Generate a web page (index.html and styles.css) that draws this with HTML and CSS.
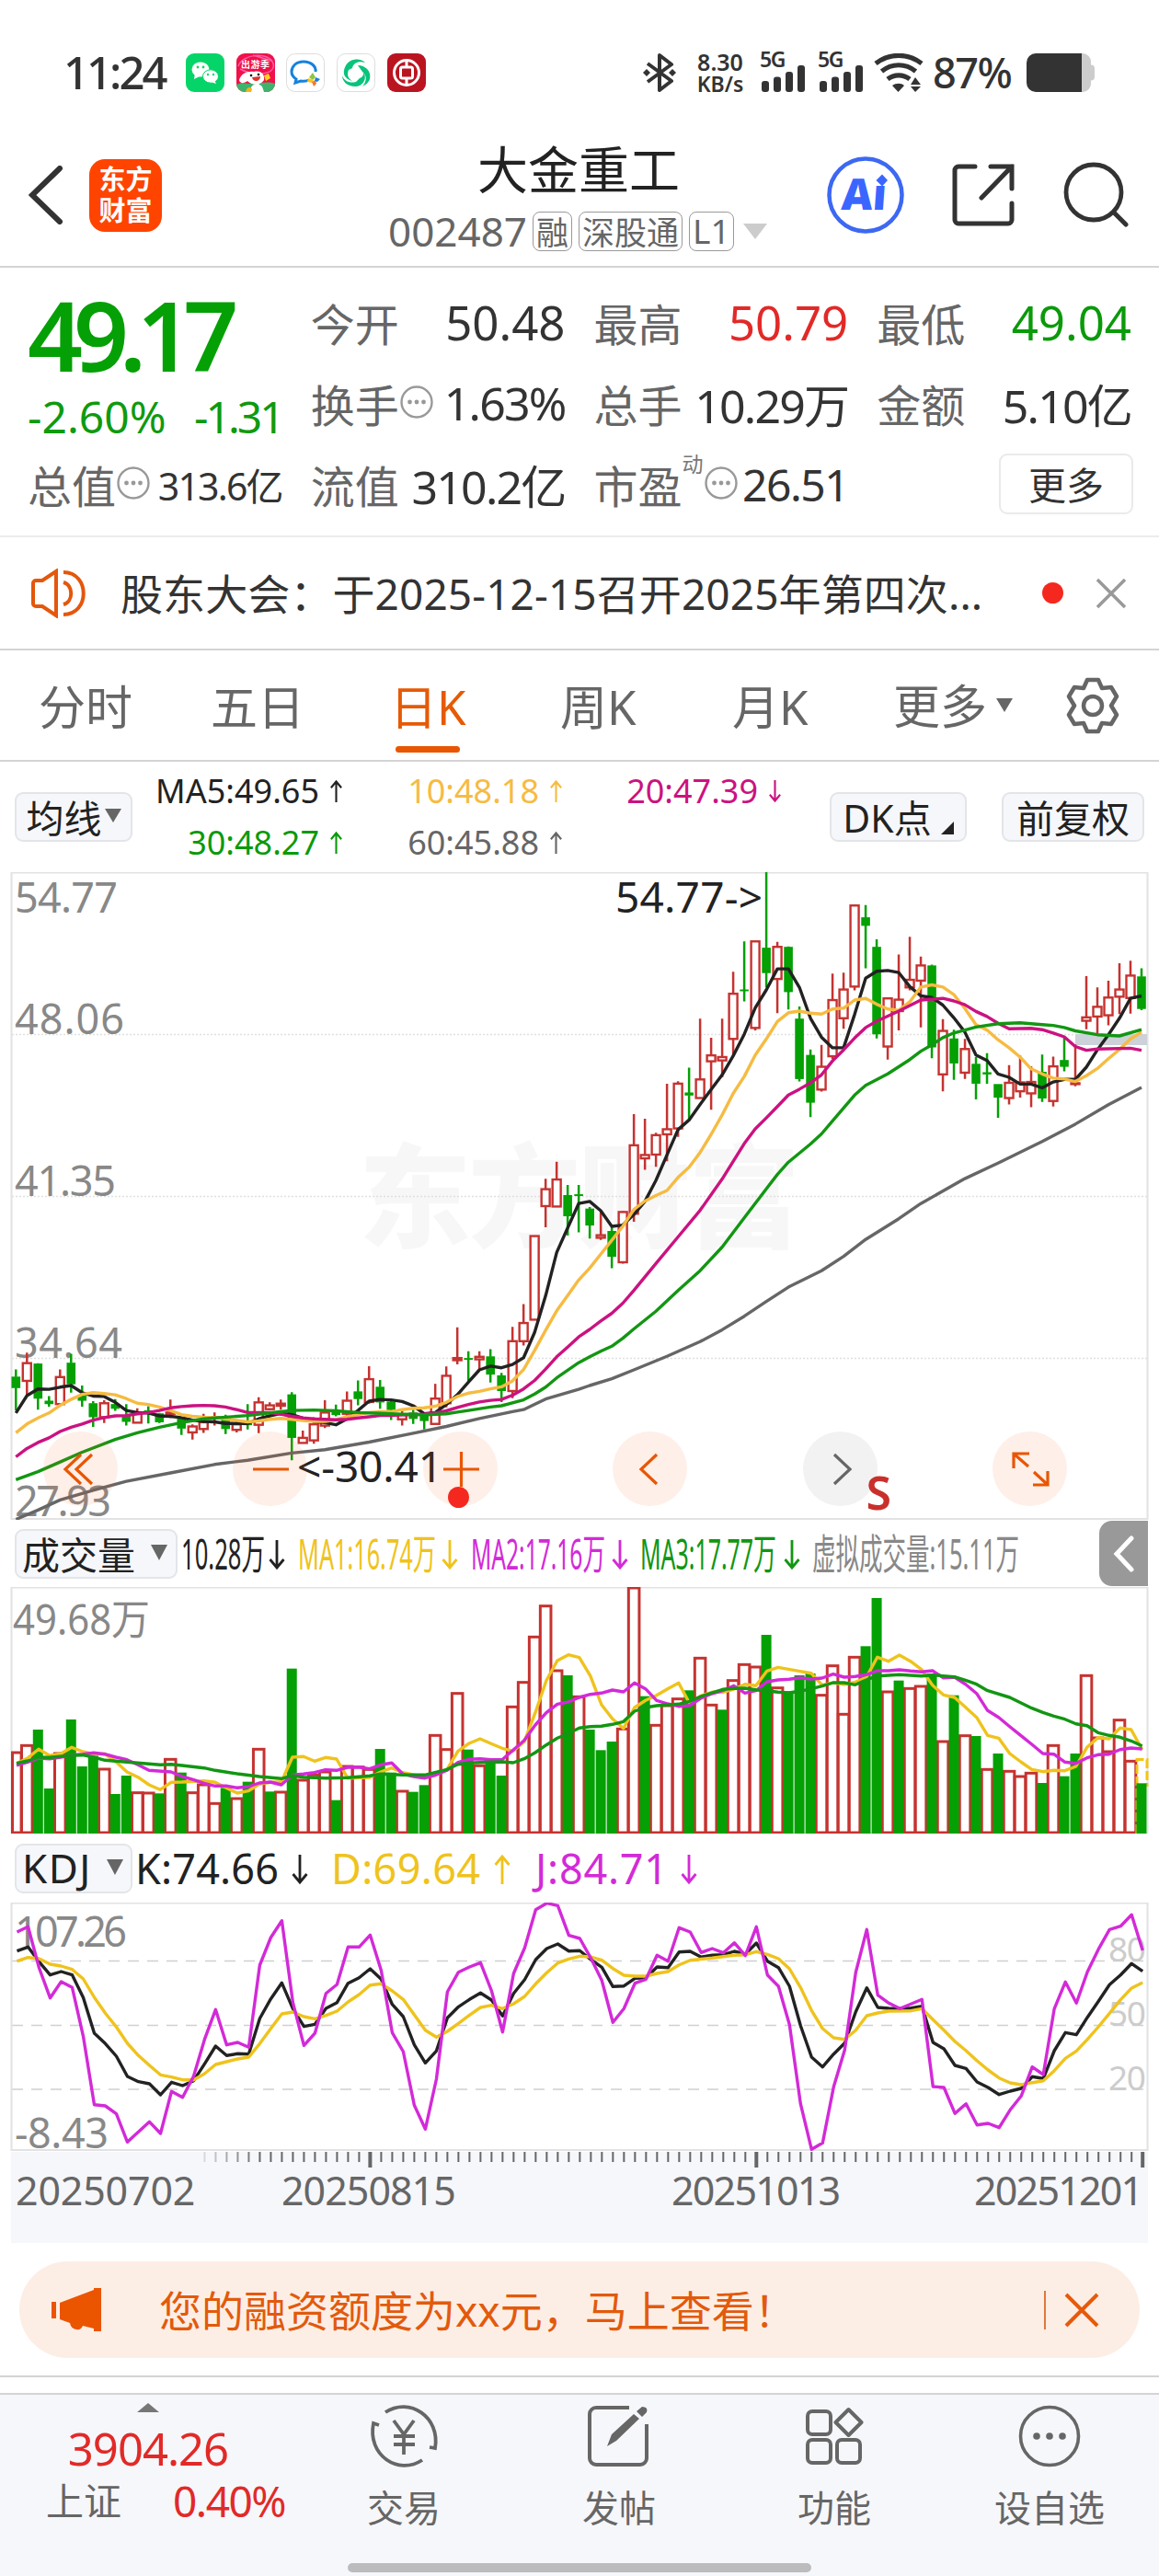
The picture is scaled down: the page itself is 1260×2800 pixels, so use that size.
FILE: index.html
```html
<!DOCTYPE html>
<html lang="zh-CN">
<head>
    <meta charset="UTF-8">
    <meta name="viewport" content="width=device-width, initial-scale=1.0">
    <title>大金重工 002487</title>
    <link rel="stylesheet" href="styles.css">
</head>
<body>

<svg class="defs" width="0" height="0">
    <symbol id="up" viewBox="0 0 20 34"><path d="M10 33V3M2.500 12L10 3l7.500 9" fill="none" stroke="currentColor" stroke-width="2.800"/></symbol>
    <symbol id="down" viewBox="0 0 20 34"><path d="M10 1v30M2.500 22l7.500 9 7.500-9" fill="none" stroke="currentColor" stroke-width="2.800"/></symbol>
    <symbol id="info" viewBox="0 0 38 38"><circle cx="19" cy="19" r="16.500" fill="none" stroke="#999" stroke-width="2.400"/><g fill="#999"><circle cx="11.500" cy="19" r="2.400"/><circle cx="19" cy="19" r="2.400"/><circle cx="26.500" cy="19" r="2.400"/></g></symbol>
    <symbol id="signal" viewBox="0 0 48 30"><g fill="#333"><rect x="0" y="17" width="8" height="12" rx="3"/><rect x="13" y="12.500" width="8" height="16.500" rx="3"/><rect x="26" y="7" width="8" height="22" rx="3"/><rect x="39" y="0" width="8" height="29" rx="3"/></g></symbol>
</svg>

<div class="status">
    <span class="clock">11:24</span>
    <div class="apps">
        <svg width="42" height="42" viewBox="0 0 42 42"><rect width="42" height="42" rx="9" fill="#05d568"/><ellipse cx="16" cy="17.500" rx="9.500" ry="8" fill="#fff"/><path d="M10 22l-1 6 6-3z" fill="#fff"/><ellipse cx="27" cy="25" rx="8.500" ry="7.200" fill="#fff" stroke="#05d568"/><path d="M31 29l2 4-6-2z" fill="#fff"/><g fill="#05d568"><circle cx="13" cy="15" r="1.400"/><circle cx="19" cy="15" r="1.400"/><circle cx="24" cy="23" r="1.200"/><circle cx="30" cy="23" r="1.200"/></g></svg>
        <svg width="42" height="42" viewBox="0 0 42 42"><rect width="42" height="42" rx="9" fill="#f0104a"/><path d="M0 34c8-4 12 0 20-1s14-3 22 0v0a9 9 0 0 1-9 9H9a9 9 0 0 1-9-9z" fill="#3eb36c"/><path d="M2 14c4-14 34-16 38-3s-22 14-36 6M18 2l20 6" fill="none" stroke="#ff5fa8" stroke-width="1.500"/><text x="5" y="16" class="app-word" textLength="31">出游季</text><path d="M3 29c2-7 9-10 16-9 8-2 12 3 11 9-3 6-14 6-18 1-4 3-8 3-9-1z" fill="#fff"/><path d="M15 42c0-7 4-9 9-9l4 3 2 6z" fill="#fff"/><path d="M10 42c1-6 6-6 7-3l-1 3z" fill="#f6b21c"/><path d="M30 24l5-2 2 5-5 3z" fill="#ffd21e"/><path d="M17 26l9-1c0 6-8 7-9 1z" fill="#e0332f"/><circle cx="16" cy="24" r="1.300"/><circle cx="24" cy="23" r="1.300"/></svg>
        <svg width="42" height="42" viewBox="0 0 42 42"><rect x=".5" y=".5" width="41" height="41" rx="9" fill="#fff" stroke="#ddd"/><path d="M32 20c1-6-5-11-13-11S6 14 6 20c0 4 2 6 5 8l-1 4 6-2c4 .5 7 0 9-1" fill="none" stroke="#1582dd" stroke-width="3"/><path d="M29 21l3 5-3 3-4-3z" fill="#8cc63f"/><path d="M24 27l-1 4 5 1 2-3z" fill="#fcc419"/><path d="M28 31l2 5 3-3-1-4z" fill="#f4792a"/><path d="M32 26l5 2-3 3-3-1z" fill="#1582dd"/></svg>
        <svg width="42" height="42" viewBox="0 0 42 42"><rect x=".5" y=".5" width="41" height="41" rx="9" fill="#fff" stroke="#ddd"/><g fill="#08c37b"><path d="M10 13C15 5 26 5 31 10c-7-2-13 0-14 6l-4 2c-2 5-1 9 4 12-8-2-12-8-7-17z"/><path d="M23 13c9 0 15 7 13 15-2 5-6 7-8 8 5-6 5-12 0-16z"/><path d="M6 24c2 6 8 9 15 7l4-4c3-1 5-4 4-7 5 8-1 16-9 16S6 31 6 24z"/></g></svg>
        <svg width="42" height="42" viewBox="0 0 42 42"><rect width="42" height="42" rx="9" fill="#bb1421"/><circle cx="21" cy="21" r="13.500" fill="none" stroke="#fff" stroke-width="3"/><path d="M21 7v8M21 27v8" stroke="#fff" stroke-width="3"/><rect x="14.500" y="15" width="13" height="12" rx="2" fill="none" stroke="#fff" stroke-width="3"/></svg>
    </div>
    <div class="status-right">
        <svg width="38" height="42" viewBox="0 0 38 42"><path d="M6 11l26 19-13 10V2l13 10L6 31" fill="none" stroke="#333" stroke-width="4" stroke-linejoin="round"/><path d="M1 21l4-4 4 4-4 4zM29 21l4-4 4 4-4 4z" fill="#333"/></svg>
        <div class="speed"><b>8.30</b><b>KB/s</b></div>
        <div class="cell"><b>5G</b><svg width="48" height="30"><use href="#signal"/></svg></div>
        <div class="cell"><b>5G</b><svg width="48" height="30"><use href="#signal"/></svg></div>
        <svg class="wifi" width="54" height="42" viewBox="0 0 54 42"><g fill="none" stroke="#333" stroke-width="5.200"><path d="M2 11C17-.5 37-.5 52 11"/><path d="M8.500 19.500c11-9 26-9 37 0"/><path d="M15 28c7-5.500 17-5.500 24 0"/></g><path d="M20 35c4-3 10-3 13 0l-6.500 7zM40 34l5-8 6 8zM40 36h11l-6 6z" fill="#333"/></svg>
        <span class="percent">87%</span>
        <svg width="74" height="42" viewBox="0 0 74 42"><path d="M60 0h1a9 9 0 0 1 9 9v3.500q4 0 4 4v9q0 4-4 4V33a9 9 0 0 1-9 9h-1z" fill="#ccc"/><path d="M10 0h50v42H10A10 10 0 0 1 0 32V10A10 10 0 0 1 10 0z" fill="#333"/></svg>
    </div>
</div>

<header class="header">
    <svg width="38" height="64" viewBox="0 0 38 64"><path d="M34 3L4 32l30 29" fill="none" stroke="#333" stroke-width="6" stroke-linecap="round"/></svg>
    <div class="logo"><span>东方</span><span>财富</span></div>
    <div class="stock">
        <h1>大金重工</h1>
        <div class="code"><span class="num">002487</span><i>融</i><i>深股通</i><i class="l1">L1</i><svg width="26" height="18"><path d="M0 1h26L13 18z" fill="#ccc"/></svg></div>
    </div>
    <div class="tools">
        <svg width="84" height="84" viewBox="0 0 84 84"><circle cx="42" cy="42" r="39.500" fill="none" stroke="#3c68f2" stroke-width="4.500"/><g transform="skewX(-4)"><text x="19" y="58" class="ai-word" textLength="49" lengthAdjust="spacingAndGlyphs">Aı</text></g><path d="M60 19.500l6 6.500-6 6.500-6.500-6.500z" fill="#3a66ff"/></svg>
        <svg width="68" height="68" viewBox="0 0 68 68"><path d="M25 3H7a4 4 0 0 0-4 4v54a4 4 0 0 0 4 4h54a4 4 0 0 0 4-4V43M42 3h23v24M65 3L32 37" fill="none" stroke="#333" stroke-width="5" stroke-linecap="round"/></svg>
        <svg width="72" height="72" viewBox="0 0 72 72"><circle cx="34" cy="33" r="30" fill="none" stroke="#333" stroke-width="4.800"/><path d="M56 55l13 13" stroke="#333" stroke-width="5" stroke-linecap="round"/></svg>
    </div>
</header>

<section class="quote">
    <div class="col">
        <div class="price">49.17</div>
        <div class="change"><span>-2.60%</span><span class="diff">-1.31</span></div>
        <div class="cellrow small"><label>总值</label><svg width="38" height="38"><use href="#info"/></svg><span class="unit">313.6亿</span></div>
    </div>
    <div class="col">
        <div class="cellrow"><label>今开</label><span>50.48</span></div>
        <div class="cellrow"><label>换手</label><svg width="38" height="38"><use href="#info"/></svg><span class="unit">1.63%</span></div>
        <div class="cellrow"><label>流值</label><span class="unit">310.2亿</span></div>
    </div>
    <div class="col">
        <div class="cellrow"><label>最高</label><span class="red">50.79</span></div>
        <div class="cellrow"><label>总手</label><span class="unit">10.29万</span></div>
        <div class="cellrow pe"><label>市盈</label><sup>动</sup><svg width="38" height="38"><use href="#info"/></svg><span>26.51</span></div>
    </div>
    <div class="col">
        <div class="cellrow"><label>最低</label><span class="green">49.04</span></div>
        <div class="cellrow"><label>金额</label><span class="unit">5.10亿</span></div>
        <div class="cellrow"><button class="more">更多</button></div>
    </div>
</section>

<section class="notice">
    <svg width="62" height="54" viewBox="0 0 62 54"><g fill="none" stroke="#e4570c" stroke-width="4"><path d="M28 3v48L13 41H6a3 3 0 0 1-3-3V16a3 3 0 0 1 3-3h7z"/><path d="M36 15c11 3 11 21 0 24M36 4c29 0 29 46 0 46"/></g></svg>
    <p>股东大会：于2025-12-15召开2025年第四次...</p>
    <span class="dot"></span>
    <svg width="34" height="34"><path d="M2 2l30 30M32 2L2 32" stroke="#999" stroke-width="3.500"/></svg>
</section>

<nav class="tabs">
    <a>分时</a><a>五日</a><a class="active">日K</a><a>周K</a><a>月K</a><a class="tab-more">更多<svg width="18" height="15"><path d="M0 0h18L9 15z" fill="#666"/></svg></a>
    <svg class="gear" width="62" height="62" viewBox="0 0 62 62"><path d="M25 3h12l4 9 10-1 6 10-6 10 6 10-6 10-10-1-4 9H25l-4-9-10 1-6-10 6-10-6-10 6-10 10 1z" fill="none" stroke="#666" stroke-width="4.500" stroke-linejoin="round"/><circle cx="31" cy="31" r="10" fill="none" stroke="#666" stroke-width="4.500"/></svg>
</nav>

<div class="ma-bar">
    <button>均线<svg width="18" height="15"><path d="M0 0h18L9 15z" fill="#666"/></svg></button>
    <div class="ma-values">
        <span class="k">MA5:49.65<svg width="15" height="26"><use href="#up"/></svg></span>
        <span class="yellow">10:48.18<svg width="15" height="26"><use href="#up"/></svg></span>
        <span class="pink">20:47.39<svg width="15" height="26"><use href="#down"/></svg></span>
        <span class="green">30:48.27<svg width="15" height="26"><use href="#up"/></svg></span>
        <span class="gray">60:45.88<svg width="15" height="26"><use href="#up"/></svg></span>
    </div>
    <button class="dk">DK点<svg width="14" height="14"><path d="M14 0v14H0z" fill="#222"/></svg></button>
    <button class="adjust">前复权</button>
</div>

<div class="kline">
    <svg id="kChart" width="1260" height="704">
        <text class="watermark" x="390" y="398" textLength="480">东方财富</text>
        <g class="grid dotted"><path d="M13 176.500H1247M13 352.500H1247M13 528.500H1247"/></g>
        <rect class="frame" x="12.500" y="0.500" width="1235" height="702.500"/>
        <g class="axis-label">
            <text x="16" y="44" textLength="112">54.77</text>
            <text x="16" y="176" textLength="119">48.06</text>
            <text x="16" y="352" textLength="110">41.35</text>
            <text x="16" y="528" textLength="117">34.64</text>
            <text x="16" y="700" textLength="105">27.93</text>
        </g>
        <rect x="1169" y="176" width="78" height="12" fill="#cdd1d9"/>
        <g id="kPlot"></g>
        <text class="mark" x="669" y="44" textLength="160">54.77-&gt;</text>
        <text class="mark" x="323" y="663" textLength="158">&lt;-30.41</text>
    </svg>
    <div class="controls">
        <button><svg width="82" height="82"><path d="M41 25L24 41l17 16M53 25L36 41l17 16"/></svg></button>
        <button><svg width="82" height="82"><path d="M22 41h39"/></svg></button>
        <button><svg width="82" height="82"><path d="M22 41h39M41.500 22v38"/></svg><span class="dot"></span></button>
        <button><svg width="82" height="82"><path d="M48 25L31 41l17 16"/></svg></button>
        <button class="off"><svg width="82" height="82"><path d="M34 25l17 16-17 16"/></svg><b>S</b></button>
        <button><svg width="82" height="82"><path d="M40 24H23v16M24 25l15 13M44 58h16V43M59 57L45 44"/></svg></button>
    </div>
</div>

<div class="ind-bar">
    <button class="wide">成交量<svg width="18" height="17"><path d="M0 0h18L9 17z" fill="#666"/></svg></button>
    <svg class="ind-text" width="930" height="74">
        <text x="4" y="54" textLength="91" lengthAdjust="spacingAndGlyphs" fill="#222">10.28万</text><use href="#down" x="98" y="21" width="20" height="34" color="#222"/>
        <text x="131" y="54" textLength="150" lengthAdjust="spacingAndGlyphs" fill="#efc31c">MA1:16.74万</text><use href="#down" x="286" y="21" width="20" height="34" color="#efc31c"/>
        <text x="319" y="54" textLength="146" lengthAdjust="spacingAndGlyphs" fill="#d32ad8">MA2:17.16万</text><use href="#down" x="471" y="21" width="20" height="34" color="#d32ad8"/>
        <text x="503" y="54" textLength="148" lengthAdjust="spacingAndGlyphs" fill="#129612">MA3:17.77万</text><use href="#down" x="658" y="21" width="20" height="34" color="#129612"/>
        <text x="690" y="54" textLength="225" lengthAdjust="spacingAndGlyphs" fill="#888">虚拟成交量:15.11万</text>
    </svg>
    <span class="drawer"><svg width="24" height="40"><path d="M20 3L4 20l16 17" fill="none" stroke="#fff" stroke-width="5" stroke-linecap="round"/></svg></span>
</div>
<svg id="volChart" class="block" width="1260" height="268">
    <rect class="frame" x="12.500" y="0.500" width="1235" height="267"/>
    <g class="axis-label"><text x="14" y="52" textLength="149" lengthAdjust="spacingAndGlyphs">49.68万</text></g>
    <g id="volPlot"></g>
</svg>

<div class="ind-bar kdj">
    <button class="narrow">KDJ<svg width="18" height="17"><path d="M0 0h18L9 17z" fill="#666"/></svg></button>
    <svg class="ind-text" width="700" height="75">
        <text x="3" y="55" textLength="156" fill="#222">K:74.66</text><use href="#down" x="172" y="22" width="20" height="34" color="#222"/>
        <text x="216" y="55" textLength="162" fill="#efc31c">D:69.64</text><use href="#up" x="392" y="22" width="20" height="34" color="#efc31c"/>
        <text x="438" y="55" textLength="144" fill="#d32ad8">J:84.71</text><use href="#down" x="595" y="22" width="20" height="34" color="#d32ad8"/>
    </svg>
</div>
<svg id="kdjChart" class="block" width="1260" height="270">
    <g class="grid dashed"><path d="M13 63.500H1247M13 133.500H1247M13 203H1247"/></g>
    <rect class="frame" x="12.500" y="0.500" width="1235" height="268.500"/>
    <g class="axis-label">
        <text x="16" y="48" textLength="122">107.26</text>
        <text x="16" y="267" textLength="102">-8.43</text>
    </g>
    <g class="level">
        <text x="1205" y="64" textLength="41">80</text>
        <text x="1205" y="134" textLength="41">50</text>
        <text x="1205" y="204" textLength="41">20</text>
    </g>
    <g id="kdjPlot"></g>
</svg>
<div class="dates">
    <svg id="ticks" class="block" width="1235" height="22"></svg>
    <div><span>20250702</span><span>20250815</span><span>20251013</span><span>20251201</span></div>
</div>

<div class="promo">
    <svg width="56" height="48" viewBox="0 0 56 48"><path d="M0 15h5v18H0zM9 16L46 2V0h8v47h-8v-3l-12-3q-2 5-7 4-6-1-7-7L9 34z" fill="#eb5500"/></svg>
    <p>您的融资额度为xx元，马上查看！</p>
    <i></i>
    <svg width="40" height="40"><path d="M3 3l34 34M37 3L3 37" stroke="#e65a0a" stroke-width="4"/></svg>
</div>

<footer class="footer">
    <div class="index">
        <svg width="24" height="10"><path d="M12 0l12 10H0z" fill="#777"/></svg>
        <strong>3904.26</strong>
        <div><span>上证</span><em>0.40%</em></div>
    </div>
    <a>
        <svg width="78" height="70" viewBox="0 0 78 70"><g fill="none" stroke="#666" stroke-width="3.800"><path d="M19 9c26-17 60 5 54 39l-6-1M59 61C33 78-1 56 6 21l6 2"/><path d="M28 18l11 15 11-15M28 35h23M28 44h23M39 33v22"/></g></svg>
        <span>交易</span>
    </a>
    <a>
        <svg width="70" height="66" viewBox="0 0 70 66"><path d="M46 2H10a7 7 0 0 0-7 7v48a7 7 0 0 0 7 7h48a7 7 0 0 0 7-7V20" fill="none" stroke="#666" stroke-width="4"/><path d="M22 44l5-13 24-22 6 5-25 24zM54 6l6-5q7 0 5 6l-5 5z" fill="#666"/></svg>
        <span>发帖</span>
    </a>
    <a>
        <svg width="64" height="64" viewBox="0 0 64 64"><g fill="none" stroke="#666" stroke-width="4"><rect x="3" y="5" width="25" height="25" rx="5"/><rect x="3" y="36" width="25" height="25" rx="5"/><rect x="35" y="36" width="25" height="25" rx="5"/><path d="M47.500 3l14 14-14 14-14-14z" stroke-linejoin="round"/></g></svg>
        <span>功能</span>
    </a>
    <a>
        <svg width="68" height="68" viewBox="0 0 68 68"><circle cx="34" cy="34" r="31.500" fill="none" stroke="#666" stroke-width="3.600"/><g fill="#666"><circle cx="20" cy="34" r="3.800"/><circle cx="34" cy="34" r="3.800"/><circle cx="48" cy="34" r="3.800"/></g></svg>
        <span>设自选</span>
    </a>
    <span class="home"></span>
</footer>

<script src="chart.js"></script>
</body>
</html>
```
FILE: styles.css
```css
* {
    box-sizing: border-box;
}
body {
    margin: 0;
    width: 1260px;
    height: 2800px;
    overflow: hidden;
    background: #fff;
    color: #222;
    font-family: 'Noto Sans', 'Noto Sans CJK SC', sans-serif;
}
svg {
    display: block;
    flex: none;
}
button {
    font: inherit;
    color: inherit;
    padding: 0;
    border: 2px solid #e3e5e8;
    border-radius: 9px;
    background: #f6f7fa;
}
p, h1 {
    margin: 0;
    font-weight: 400;
}
.defs {
    position: absolute;
}
.red { color: #e12a28; }
.green { color: #0a9a0a; }
.yellow { color: #f6bb42; }
.pink { color: #cb1280; }
.gray { color: #666; }

/* status bar */
.status {
    display: flex;
    align-items: center;
    height: 158px;
    padding: 0 70px 0 69px;
    color: #333;
}
.clock {
    width: 133px;
    padding-bottom: 2px;
    font-size: 49px;
    font-weight: 500;
    letter-spacing: -3px;
}
.apps {
    display: flex;
    gap: 12.700px;
}
.app-word {
    font-size: 10px;
    font-weight: 700;
    fill: #fff;
}
.status-right {
    display: flex;
    align-items: center;
    margin-left: auto;
}
.speed {
    display: flex;
    flex-direction: column;
    align-items: center;
    width: 56px;
    margin: 0 15px 0 19px;
    font-size: 25px;
    font-weight: 600;
    line-height: 24px;
}
.speed b, .cell b {
    font-weight: 600;
}
.speed b + b {
    font-size: 23px;
}
.cell {
    display: flex;
    flex-direction: column;
    width: 50px;
    margin-right: 13px;
    line-height: 14px;
    font-size: 23px;
    letter-spacing: -1.500px;
}
.cell svg {
    margin-left: 2px;
}
.wifi {
    margin-left: -2px;
}
.percent {
    width: 112px;
    padding-left: 10px;
    padding-bottom: 2px;
    font-size: 45px;
    font-weight: 500;
    letter-spacing: -1.500px;
}

/* header */
.header {
    display: flex;
    align-items: center;
    height: 133px;
    border-bottom: 2px solid #d4d4d4;
    padding: 0 33px 23px 31px;
}
.logo {
    display: flex;
    flex-direction: column;
    justify-content: center;
    align-items: center;
    width: 79px;
    height: 79px;
    margin-left: 28px;
    border-radius: 17px;
    background: #ff4400;
    color: #fff;
    font-size: 29px;
    font-weight: 700;
    line-height: 34px;
}
.stock {
    width: 420px;
    margin-left: 246px;
}
.stock h1 {
    padding: 5px 0 0 97px;
    font-size: 55px;
    line-height: 62px;
}
.code {
    display: flex;
    align-items: center;
    gap: 7px;
    height: 50px;
    margin-top: 11px;
    color: #666;
    font-size: 44px;
}
.code .num {
    width: 150px;
}
.code i {
    display: flex;
    align-items: center;
    height: 43px;
    padding: 0 3px 2px;
    border: 1.500px solid #999;
    border-radius: 8px;
    font-style: normal;
    font-size: 35px;
}
.code .l1 {
    font-size: 37px;
}
.code svg {
    margin-left: 3px;
}
.tools {
    display: flex;
    align-items: center;
    gap: 52px;
    margin-left: auto;
}
.ai-word {
    font-size: 47px;
    font-weight: 900;
    fill: #3a66ff;
    font-family: 'Noto Sans', sans-serif;
}

/* quote */
.quote {
    display: flex;
    gap: 31px;
    height: 293px;
    padding: 17px 30px 0;
    border-bottom: 2px solid #ececec;
}
.col {
    width: 277px;
}
.price {
    height: 118px;
    line-height: 112px;
    font-size: 105px;
    font-weight: 600;
    letter-spacing: -10px;
    color: #05a005;
}
.change {
    display: flex;
    justify-content: space-between;
    height: 58px;
    line-height: 54px;
    font-size: 48px;
    color: #0f9a0f;
}
.change .diff {
    letter-spacing: -3px;
}
.cellrow {
    display: flex;
    align-items: center;
    height: 88px;
    padding-bottom: 4px;
    font-size: 51px;
    color: #333;
    white-space: nowrap;
}
.cellrow label {
    font-size: 48px;
    color: #666;
}
.cellrow svg {
    margin-top: -2px;
}
.cellrow span {
    margin-left: auto;
}
.cellrow .red { color: #e12a28; }
.cellrow .green { color: #0a9a0a; }
.cellrow .unit {
    font-size: 50px;
    letter-spacing: -1.800px;
}
.small .unit {
    font-size: 41px;
}
.pe {
    font-size: 48px;
}
.cellrow.pe span {
    letter-spacing: -1.500px;
}
.pe sup {
    align-self: flex-start;
    margin-top: 2px;
    font-size: 23px;
    color: #777;
}
.more {
    width: 146px;
    height: 66px;
    margin-left: auto;
    margin-right: -2px;
    padding-bottom: 3px;
    border: 2px solid #eaeaea;
    background: #fff;
    font-size: 41px;
}

/* notice */
.notice {
    display: flex;
    align-items: center;
    height: 123px;
    padding: 0 35px 0 33px;
    border-bottom: 2px solid #d4d4d4;
}
.notice p {
    width: 1000px;
    margin-left: 36px;
    padding-bottom: 3px;
    font-size: 46px;
    letter-spacing: 0.100px;
    white-space: nowrap;
    color: #333;
}
.dot {
    width: 23px;
    height: 23px;
    border-radius: 50%;
    background: #f5281f;
}
.notice .dot {
    margin-left: 2px;
}
.notice svg:last-child {
    margin-left: auto;
}

/* tabs */
.tabs {
    display: flex;
    align-items: center;
    height: 121px;
    padding: 0 41px 0 42px;
    border-bottom: 2px solid #d4d4d4;
    color: #666;
    font-size: 51px;
}
.tabs a {
    width: 187px;
    height: 100px;
    line-height: 102px;
}
.tabs a:nth-child(2) { width: 195px; }
.tabs a:nth-child(3) { width: 185px; }
.tabs a:nth-child(5) { width: 175px; }
.tabs .active {
    color: #e65a05;
}
.tabs .active::after {
    content: '';
    display: block;
    width: 70px;
    height: 7px;
    margin-top: -8px;
    margin-left: 6px;
    border-radius: 4px;
    background: #e85604;
}
.tabs .tab-more {
    display: flex;
    align-items: center;
    gap: 10px;
    width: auto;
}
.gear {
    margin-left: auto;
}

/* moving averages */
.ma-bar {
    display: flex;
    align-items: center;
    height: 120px;
    padding: 0 16px;
}
.ma-bar button {
    display: flex;
    align-items: center;
    justify-content: center;
    gap: 3px;
    width: 128px;
    height: 54px;
    padding-bottom: 3px;
    font-size: 41px;
}
.ma-values {
    display: grid;
    grid-template-columns: 229px 239px 238px;
    font-size: 36px;
    line-height: 56px;
}
.ma-values span {
    display: flex;
    align-items: center;
    justify-content: flex-end;
    gap: 11px;
}
.ma-bar .dk {
    width: 149px;
    margin-left: 52px;
}
.ma-bar .dk svg {
    align-self: flex-end;
    margin: 0 0 3px 7px;
}
.ma-bar .adjust {
    width: 155px;
    margin-left: auto;
}

/* charts */
.kline {
    position: relative;
    height: 704px;
}
.frame {
    fill: none;
    stroke: #e2e2e2;
    stroke-width: 2;
}
.grid path {
    stroke: #e0e0e0;
    stroke-width: 1.500;
}
.dotted path {
    stroke-dasharray: 2 2;
}
.dashed path {
    stroke: #d0d0d0;
    stroke-dasharray: 12 9;
}
.axis-label {
    font-size: 45px;
    fill: #888;
}
.level {
    font-size: 37px;
    fill: #ccc;
}
.mark {
    font-size: 46px;
    fill: #222;
}
.watermark {
    font-size: 122px;
    font-weight: 900;
    fill: #f7f7f7;
}
.controls {
    position: absolute;
    left: 47px;
    top: 608px;
    width: 1113px;
    display: flex;
    justify-content: space-between;
}
.controls button {
    position: relative;
    width: 81px;
    height: 81px;
    border: none;
    border-radius: 50%;
    background: rgba(250, 100, 30, 0.1);
}
.controls path {
    fill: none;
    stroke: #e85604;
    stroke-width: 3.200;
}
.controls .off {
    background: #f2f2f2;
}
.controls .off path {
    stroke: #666;
}
.controls b {
    position: absolute;
    left: 69px;
    top: 32px;
    font-size: 50px;
    line-height: 68px;
    font-weight: 600;
    color: #c9302c;
}
.controls .dot {
    position: absolute;
    left: 27px;
    top: 60px;
}
.ind-bar {
    display: flex;
    align-items: center;
    height: 73px;
    padding-left: 16px;
}
.kdj {
    height: 75px;
}
.ind-bar button {
    display: flex;
    align-items: center;
    justify-content: space-between;
    height: 54px;
    padding: 0 9px 2px 6px;
    font-size: 41px;
}
.ind-bar .wide { width: 177px; }
.ind-bar .narrow {
    width: 128px;
    padding-right: 8px;
    font-size: 44px;
    letter-spacing: 1.500px;
}
.ind-text {
    font-size: 45px;
}
.drawer {
    display: flex;
    align-items: center;
    justify-content: center;
    width: 53px;
    height: 71px;
    margin-left: 72px;
    border-radius: 14px 0 0 14px;
    background: #999;
}
.block {
    display: block;
}
.dates {
    height: 99px;
    margin: 1px 12px 0;
    background: #f6f7fa;
    color: #666;
}
.dates div {
    display: flex;
    font-size: 43px;
    line-height: 40px;
    padding-left: 5px;
}
.dates span {
    width: 289px;
    letter-spacing: -0.200px;
}
.dates span:nth-child(2) { width: 424px; letter-spacing: -1px; }
.dates span:nth-child(3) { width: 329px; letter-spacing: -1.800px; }
.dates span:nth-child(4) { width: 185px; letter-spacing: -1.800px; }

/* promo */
.promo {
    display: flex;
    align-items: center;
    width: 1218px;
    height: 105px;
    margin: 20px 21px 19px;
    padding: 0 43px 0 35px;
    border-radius: 53px;
    background: #fdeee5;
    color: #e25a0c;
    font-size: 46px;
}
.promo p {
    width: 959px;
    margin-left: 61px;
    padding-bottom: 4px;
}
.promo i {
    width: 2px;
    height: 42px;
    margin-right: auto;
    margin-left: 3px;
    background: #e0783a;
}

/* footer */
.footer {
    position: relative;
    display: flex;
    height: 218px;
    border-top: 2px solid #d4d4d4;
    color: #666;
}
.footer::before {
    content: '';
    position: absolute;
    top: 17px;
    left: 0;
    right: 0;
    bottom: 0;
    border-top: 2px solid #d4d4d4;
    background: #f6f7fa;
}
.footer a, .index {
    position: relative;
    display: flex;
    flex-direction: column;
    align-items: center;
    width: 234px;
    padding-top: 28px;
}
.footer a svg {
    height: 72px;
}
.footer a span {
    font-size: 40px;
    line-height: 50px;
    margin-top: 17px;
}
.index {
    width: 322px;
}
.index strong {
    margin-top: 11px;
    font-size: 49px;
    line-height: 56px;
    font-weight: 400;
    letter-spacing: -1px;
    color: #e12a28;
}
.index div {
    display: flex;
    gap: 56px;
    font-size: 41px;
    line-height: 58px;
    margin-left: 38px;
}
.index em {
    font-style: normal;
    font-size: 46px;
    letter-spacing: -1.500px;
    color: #e12a28;
}
.home {
    position: absolute;
    left: 378px;
    bottom: 4px;
    width: 504px;
    height: 10px;
    border-radius: 5px;
    background: #bcbcbf;
}
```
FILE: chart.js
```js
const STEP = 11.997;
const RED = '#c53330';
const GREEN = '#04a004';

// [up, high, body top, body bottom, low] on a 1532 unit high axis that starts at 17
const candles = [
    [0,1195,1213,1238,1292],[1,1155,1180,1222,1255],[0,1180,1182,1263,1290],[0,1258,1270,1276,1283],[1,1195,1213,1277,1280],
    [0,1158,1180,1229,1250],[0,1233,1258,1268,1283],[0,1270,1276,1307,1331],[1,1268,1275,1308,1322],[0,1265,1278,1287,1293],
    [0,1277,1305,1318,1328],[1,1287,1300,1321,1322],[0,1282,1293,1296,1323],[0,1298,1300,1319,1322],[1,1266,1297,1300,1310],
    [0,1308,1312,1334,1350],[1,1325,1330,1344,1361],[1,1300,1320,1336,1345],[1,1297,1308,1311,1328],[0,1302,1308,1335,1348],
    [1,1318,1325,1338,1344],[0,1277,1323,1326,1337],[1,1261,1273,1326,1346],[1,1273,1280,1289,1292],[1,1266,1276,1281,1290],
    [0,1249,1255,1356,1410],[1,1340,1357,1369,1370],[1,1308,1325,1363,1371],[1,1268,1297,1328,1334],[0,1278,1296,1302,1306],
    [1,1247,1269,1300,1308],[0,1221,1248,1264,1280],[1,1187,1218,1272,1276],[0,1220,1237,1272,1288],[0,1268,1272,1290,1315],
    [1,1290,1303,1313,1328],[0,1290,1298,1311,1324],[0,1298,1300,1316,1337],[1,1229,1264,1324,1324],[1,1188,1210,1275,1285],
    [1,1095,1168,1173,1183],[0,1152,1169,1171,1222],[1,1152,1165,1171,1194],[0,1147,1165,1206,1226],[0,1203,1210,1245,1272],
    [1,1094,1128,1246,1263],[1,1040,1085,1128,1138],[1,878,879,1077,1077],[1,743,768,808,858],[1,703,745,809,809],
    [0,758,783,831,878],[0,758,781,783,870],[0,810,815,853,885],[1,820,877,883,888],[0,858,868,927,955],
    [1,820,822,941,944],[1,590,664,826,845],[1,601,687,695,722],[1,634,640,686,715],[1,518,626,638,702],
    [1,512,518,624,644],[0,480,540,545,602],[1,364,508,552,552],[1,409,451,465,580],[1,364,455,463,503],
    [1,253,305,412,452],[0,181,296,298,323],[1,181,181,386,392],[0,17,197,255,290],[1,182,194,270,351],
    [0,193,195,300,342],[0,335,365,506,513],[0,437,451,562,597],[1,426,478,532,537],[1,257,320,453,460],
    [1,255,295,363,388],[1,94,96,288,297],[0,95,125,143,245],[0,176,195,400,411],[1,314,316,430,461],
    [1,212,319,346,392],[1,170,272,290,297],[1,217,238,274,385],[0,236,239,431,458],[1,365,393,496,536],
    [0,390,412,469,509],[1,412,436,492,507],[0,455,472,517,555],[0,446,492,495,518],[0,520,520,550,599],
    [1,474,516,552,567],[1,451,515,536,551],[1,477,514,541,574],[0,449,491,552,561],[1,454,477,559,572],
    [0,408,463,477,489],[1,425,517,519,524],[1,263,361,369,389],[1,290,336,359,400],[1,274,314,356,380],
    [1,233,295,312,353],[1,227,262,315,352],[0,245,265,340,344]
];

// moving averages, "index:value" pairs
const ma = {
    '#666666': '0:1550 2:1528 4:1504 7:1481 10:1460 14:1440 18:1420 21:1410 25:1393 28:1385 32:1367 36:1346 39:1330 42:1311 45:1295 46:1290 48:1265 51:1242 52:1233 54:1217 56:1196 59:1164 62:1129 64:1101 66:1069 68:1034 70:1000 73:961 75:927 77:887 80:838 82:802 86:743 89:706 93:655 96:614 99:568 102:527',
    '#222222': '0:1298 1:1257 2:1241 3:1242 4:1237 5:1233 6:1250 7:1258 8:1259 9:1273 10:1292 11:1297 12:1298 13:1305 14:1306 15:1309 16:1315 17:1318 18:1319 19:1323 20:1323 21:1323 22:1312 23:1305 24:1299 25:1302 26:1310 27:1318 28:1321 29:1326 30:1312 31:1292 32:1270 33:1266 34:1267 35:1271 36:1281 37:1300 38:1297 39:1278 40:1255 41:1225 42:1196 43:1187 44:1191 45:1183 46:1167 47:1107 48:1020 49:918 50:860 51:802 52:797 53:819 54:856 55:853 56:828 57:797 58:747 59:687 60:627 61:604 62:567 63:532 64:497 65:452 66:401 67:338 68:296 69:246 70:246 71:290 72:363 73:408 74:433 75:433 76:354 77:268 78:252 79:250 80:255 81:288 82:310 83:314 84:332 85:362 86:396 87:450 88:463 89:495 90:503 91:519 92:519 93:528 94:514 95:508 96:508 97:479 98:438 99:402 100:363 101:316 102:310',
    '#f6bb42': '0:1345 1:1324 2:1310 3:1298 4:1280 5:1266 6:1254 7:1250 8:1252 9:1255 10:1264 11:1275 12:1278 13:1284 14:1292 15:1302 16:1306 17:1308 18:1309 19:1312 21:1319 22:1317 23:1313 24:1311 25:1313 26:1316 27:1318 28:1318 29:1314 30:1307 31:1302 32:1297 33:1295 34:1295 35:1290 36:1287 37:1286 38:1282 39:1273 40:1259 41:1251 42:1247 43:1241 44:1236 45:1222 46:1195 47:1150 48:1102 49:1056 50:1020 51:983 52:955 53:922 54:889 55:856 56:816 57:796 58:783 59:771 60:740 61:716 62:681 63:638 64:592 65:541 66:501 67:450 68:412 69:371 70:350 71:346 72:351 73:353 74:341 75:339 76:320 77:316 78:330 79:341 80:344 81:324 82:289 83:284 84:289 85:307 86:340 87:378 88:391 89:414 90:433 91:455 92:483 93:495 94:505 95:507 96:513 97:499 98:482 99:459 100:437 101:412 102:396',
    '#cb1280': '0:1402 1:1382 2:1368 3:1357 4:1342 5:1332 6:1324 7:1315 8:1309 9:1305 10:1304 11:1300 12:1297 13:1292 14:1286 15:1283 16:1281 17:1280 18:1281 19:1284 20:1290 21:1297 22:1297 23:1297 24:1301 25:1306 26:1310 27:1312 28:1313 29:1314 30:1313 31:1310 32:1307 33:1304 34:1304 35:1302 37:1301 38:1298 39:1293 40:1285 41:1278 42:1272 43:1268 44:1266 45:1256 46:1241 47:1221 48:1194 49:1165 50:1142 51:1118 52:1100 53:1080 54:1062 55:1038 56:1008 58:944 60:881 62:818 64:744 66:660 67:625 68:599 69:572 70:545 71:531 72:516 73:497 74:464 75:438 76:410 77:385 78:370 79:358 80:346 81:333 82:320 83:318 84:316 85:322 86:331 87:347 88:359 89:375 90:388 92:387 93:390 94:398 95:407 96:430 97:439 98:436 101:434 102:439',
    '#129612': '0:1456 2:1437 4:1414 6:1391 9:1361 11:1345 13:1332 15:1321 17:1312 19:1308 21:1304 23:1298 25:1292 27:1291 29:1293 31:1297 33:1299 35:1301 37:1302 39:1300 40:1296 41:1292 43:1284 44:1281 46:1267 47:1253 48:1237 49:1215 51:1179 52:1165 53:1152 54:1140 55:1121 56:1099 58:1057 60:1008 62:961 64:905 66:836 68:767 69:733 70:704 72:661 73:637 74:606 76:545 77:522 79:495 81:461 82:441 83:426 84:409 85:398 87:384 89:376 91:374 93:378 94:380 95:385 96:393 98:402 100:405 102:390'
};

const volumes = 'u765 u742 d690 d882 u768 d657 d810 d775 u819 d900 d840 u896 u897 d898 u787 d830 u896 u870 u931 d880 u915 d860 u754 d892 u894 d491 u855 u838 u828 d920 u810 u812 u820 d753 d830 u891 d893 d871 u709 u755 u572 d755 u808 d795 d840 u616 u536 u388 u287 u498 d513 u583 d690 d757 d729 u688 u228 d581 u676 u612 u590 d562 u457 u610 d625 u530 u478 u486 d381 u554 d565 d513 d507 u578 u482 u640 u454 d418 d261 u567 d530 u556 u549 d508 u729 d578 u710 d711 u820 d768 u826 u843 u832 d864 u742 d842 d768 u514 u717 u762 u659 u793 d865'.split(' ');

const volMa = {
    '#efc31c': '0:800 1:783 2:754 3:775 4:769 5:748 6:762 7:770 8:769 9:795 10:828 11:845 12:870 13:886 14:862 15:861 17:857 18:862 19:880 20:897 21:890 22:868 23:862 24:860 25:780 26:778 27:793 28:781 29:786 30:848 32:846 33:828 34:815 35:830 37:845 38:838 39:820 40:760 41:735 42:720 43:736 44:751 45:760 46:730 47:635 48:530 49:465 50:446 51:455 52:515 53:608 54:655 55:686 56:618 57:595 58:578 59:557 60:538 61:605 62:580 63:568 64:568 65:558 66:542 67:547 68:499 69:487 71:500 72:506 73:545 74:537 75:543 76:535 77:520 78:454 79:467 80:447 81:467 82:494 83:545 84:577 85:585 86:617 87:650 88:709 89:718 90:768 91:795 92:820 93:827 94:823 95:824 96:810 97:748 98:716 99:720 100:685 101:690 102:755',
    '#d32ad8': '0:807 1:796 2:783 3:785 4:780 5:773 6:770 7:766 8:770 9:780 10:788 11:805 12:823 14:828 15:843 16:853 17:865 18:874 19:874 20:880 21:876 22:864 23:861 24:870 25:838 26:835 27:830 28:821 29:823 30:813 31:812 32:818 33:805 34:799 35:835 36:843 37:848 38:838 39:823 40:797 41:787 42:785 43:788 44:788 45:757 46:725 47:675 48:635 49:607 50:600 51:585 52:575 53:571 54:561 55:567 56:538 57:557 58:595 59:606 60:614 61:611 62:588 63:573 64:563 65:547 66:571 67:563 68:534 69:528 70:526 71:521 72:525 73:522 74:509 75:519 76:517 77:511 78:498 79:498 80:495 81:499 82:502 83:498 84:521 85:519 86:542 87:572 88:628 89:650 90:680 91:709 92:738 93:768 94:770 95:796 96:800 97:782 98:772 99:770 100:755 101:750 102:753',
    '#129612': '0:800 1:792 2:780 3:781 5:774 6:773 7:780 8:790 10:796 13:805 14:803 15:807 17:815 18:823 20:834 22:843 24:850 25:840 26:845 28:848 30:847 32:841 33:835 35:838 37:838 39:820 40:803 41:799 43:796 44:795 45:798 46:785 47:765 48:740 49:718 50:703 51:685 52:680 53:679 54:673 55:664 56:630 57:618 58:612 60:607 61:598 62:582 63:570 64:559 65:556 66:555 67:560 69:568 70:570 71:565 72:557 73:548 74:537 75:537 76:544 77:528 78:515 80:511 82:515 83:512 85:518 86:529 87:542 88:563 90:585 92:620 93:634 94:646 95:656 96:671 97:677 98:700 99:709 100:715 101:727 102:743'
};

const kdj = {
    '#222222': '0:242 1:229 2:277 3:320 4:309 5:320 6:394 7:510 8:544 9:585 10:651 11:668 12:675 13:711 14:670 15:681 16:665 17:610 18:552 19:583 20:577 21:578 22:462 23:398 24:346 25:430 26:488 27:481 28:429 29:410 30:347 31:329 32:300 33:334 34:416 35:456 36:548 37:607 38:568 39:460 40:424 41:400 42:379 43:402 44:454 45:380 46:335 47:270 48:234 49:219 50:242 51:241 52:270 53:295 54:358 55:356 56:331 57:329 58:294 59:296 60:245 61:243 62:262 63:256 64:254 65:243 66:252 67:216 68:275 69:296 70:357 71:485 72:588 73:620 74:578 75:542 76:440 77:362 78:426 79:429 80:430 81:428 82:422 83:540 84:561 85:615 86:625 87:669 88:687 89:710 90:699 91:690 92:652 93:658 94:567 95:508 96:515 97:458 98:406 99:352 100:320 101:283 102:308',
    '#efc31c': '0:275 1:263 2:267 3:285 4:291 5:302 6:333 7:393 8:445 9:490 10:543 11:583 12:615 13:646 14:653 15:662 16:662 17:642 18:612 19:603 20:594 21:588 22:544 23:495 24:447 25:441 26:456 27:463 28:452 29:438 30:408 31:384 32:353 33:349 34:372 35:400 36:450 37:500 38:523 39:504 40:478 41:451 42:426 43:419 44:430 45:414 46:390 47:349 48:313 49:281 50:268 51:259 52:261 53:272 54:299 55:321 56:324 57:324 58:315 59:309 60:287 61:272 63:265 65:256 66:254 67:244 68:253 69:267 70:300 71:361 72:436 73:495 74:525 75:530 76:500 77:453 78:444 79:438 81:437 82:430 83:466 84:500 85:537 86:567 87:600 88:630 89:656 90:672 91:678 92:671 93:665 94:632 95:592 96:568 97:530 98:489 99:445 100:401 101:363 102:345',
    '#d32ad8': '0:180 1:163 2:297 3:395 4:342 5:361 6:520 7:743 8:747 9:773 10:865 11:832 12:799 13:837 14:700 15:719 16:650 17:530 18:433 19:548 20:540 21:556 22:288 23:198 24:143 25:410 26:550 27:510 28:380 29:351 30:229 31:229 32:190 33:305 34:508 35:570 36:745 37:823 38:660 39:375 40:311 41:294 42:280 43:372 44:506 45:315 46:232 47:107 48:86 49:94 50:191 51:201 52:265 53:338 54:475 55:430 56:347 57:334 58:256 59:275 60:166 61:180 62:247 63:234 64:248 65:215 66:257 67:163 68:320 69:357 70:482 71:740 72:889 73:868 74:685 75:565 76:312 77:172 78:386 79:412 80:430 81:415 82:400 83:684 84:687 85:772 86:740 87:809 88:804 89:818 90:760 91:715 92:620 93:645 94:430 95:343 96:412 97:310 98:236 99:172 100:161 101:124 102:240'
};

function lines(series, x0, toY, width) {
    return Object.keys(series).map(color => {
        const points = series[color].split(' ').map(p => {
            const [i, v] = p.split(':').map(Number);
            return (x0 + i * STEP).toFixed(1) + ',' + toY(v).toFixed(1);
        });
        return `<polyline points="${points.join(' ')}" fill="none" stroke="${color}" stroke-width="${width}" stroke-linejoin="round"/>`;
    }).join('');
}

function drawCandles() {
    const toY = v => (v - 17) / 1532 * 703;
    let html = '';
    candles.forEach(([up, high, top, bottom, low], i) => {
        const x = 17.3 + i * STEP;
        const [h, t, b, l] = [high, top, bottom, low].map(toY);
        const color = up ? RED : GREEN;
        html += `<path d="M${x} ${h}V${t}M${x} ${b}V${l}" stroke="${color}" stroke-width="2.5"/>`;
        if (up) {
            html += `<rect x="${x - 4.5}" y="${t}" width="9" height="${b - t}" fill="#fff" stroke="${color}" stroke-width="2.4"/>`;
        } else {
            html += `<rect x="${x - 4.8}" y="${t - 0.5}" width="9.6" height="${b - t + 1}" fill="${color}"/>`;
        }
    });
    document.getElementById('kPlot').innerHTML = html + lines(ma, 17.3, toY, 3.4);
}

function drawVolume() {
    const toY = v => (v - 225) / 3;
    let red = '';
    let green = '';
    volumes.forEach((item, i) => {
        const x = 17.3 + i * STEP;
        const y = toY(Number(item.slice(1)));
        if (item[0] === 'u') {
            red += `<rect x="${Math.max(x - 5.8, 13.5)}" y="${y}" width="${i ? 11.6 : 9.6}" height="${267 - y}" fill="#fff" stroke="${RED}" stroke-width="3"/>`;
        } else {
            green += `<rect x="${x - 5.5}" y="${y}" width="11" height="${268 - y}" fill="${GREEN}"/>`;
        }
    });
    const projected = '<path d="M1236 268V187.500H1247V217" fill="none" stroke="#f3c410" stroke-width="3" stroke-dasharray="10 3"/>';
    document.getElementById('volPlot').innerHTML = red + projected + green + lines(volMa, 18, toY, 3.4);
}

function drawTicks() {
    let html = '';
    for (let i = 17; i <= 102; i++) {
        const big = i === 32 || i === 67 || i === 102;
        const opacity = Math.min(1, 0.2 + (i - 17) * 0.16);
        html += `<rect x="${6.5 + i * STEP - (big ? 2 : 1)}" y="0" width="${big ? 4 : 2}" height="${big ? 17 : 11}" fill="#666" opacity="${opacity}"/>`;
    }
    document.getElementById('ticks').innerHTML = html;
}

drawCandles();
drawVolume();
document.getElementById('kdjPlot').innerHTML = lines(kdj, 18.5, v => (v - 84) / 3, 3.4);
drawTicks();
```
